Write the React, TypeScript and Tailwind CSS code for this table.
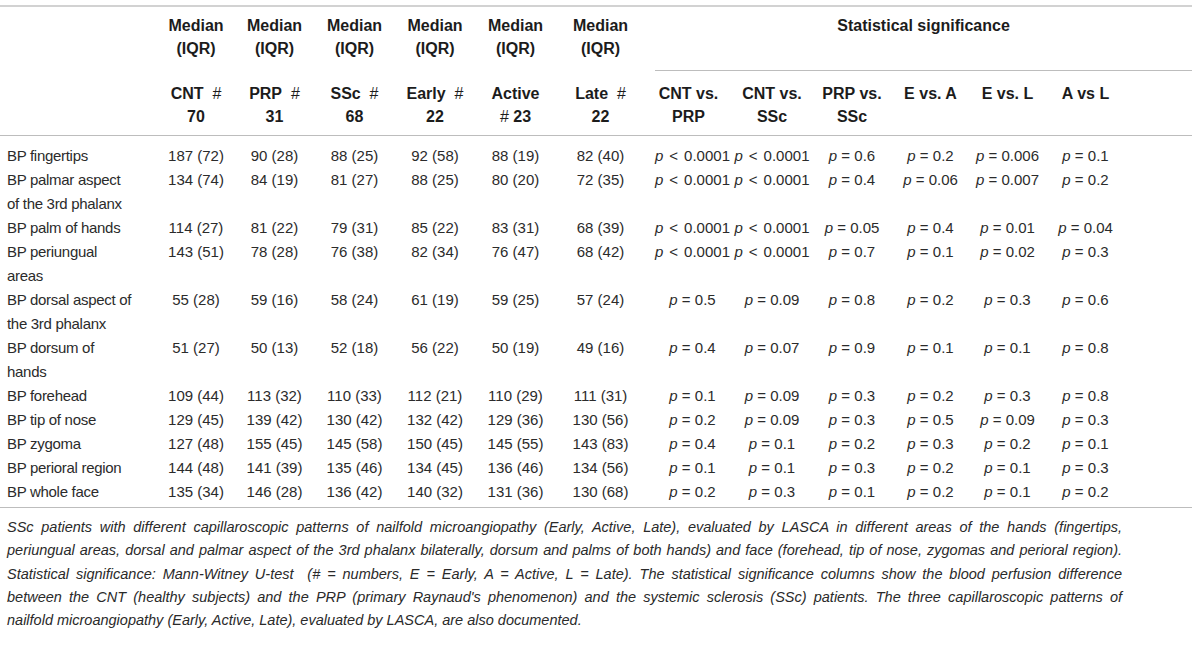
import React from "react";

type Row = { label: string[]; vals: string[]; p: string[] };

const rows: Row[] = [
  { label: ["BP fingertips"], vals: ["187 (72)", "90 (28)", "88 (25)", "92 (58)", "88 (19)", "82 (40)"], p: ["<0.0001", "<0.0001", "0.6", "0.2", "0.006", "0.1"] },
  { label: ["BP palmar aspect", "of the 3rd phalanx"], vals: ["134 (74)", "84 (19)", "81 (27)", "88 (25)", "80 (20)", "72 (35)"], p: ["<0.0001", "<0.0001", "0.4", "0.06", "0.007", "0.2"] },
  { label: ["BP palm of hands"], vals: ["114 (27)", "81 (22)", "79 (31)", "85 (22)", "83 (31)", "68 (39)"], p: ["<0.0001", "<0.0001", "0.05", "0.4", "0.01", "0.04"] },
  { label: ["BP periungual", "areas"], vals: ["143 (51)", "78 (28)", "76 (38)", "82 (34)", "76 (47)", "68 (42)"], p: ["<0.0001", "<0.0001", "0.7", "0.1", "0.02", "0.3"] },
  { label: ["BP dorsal aspect of", "the 3rd phalanx"], vals: ["55 (28)", "59 (16)", "58 (24)", "61 (19)", "59 (25)", "57 (24)"], p: ["0.5", "0.09", "0.8", "0.2", "0.3", "0.6"] },
  { label: ["BP dorsum of", "hands"], vals: ["51 (27)", "50 (13)", "52 (18)", "56 (22)", "50 (19)", "49 (16)"], p: ["0.4", "0.07", "0.9", "0.1", "0.1", "0.8"] },
  { label: ["BP forehead"], vals: ["109 (44)", "113 (32)", "110 (33)", "112 (21)", "110 (29)", "111 (31)"], p: ["0.1", "0.09", "0.3", "0.2", "0.3", "0.8"] },
  { label: ["BP tip of nose"], vals: ["129 (45)", "139 (42)", "130 (42)", "132 (42)", "129 (36)", "130 (56)"], p: ["0.2", "0.09", "0.3", "0.5", "0.09", "0.3"] },
  { label: ["BP zygoma"], vals: ["127 (48)", "155 (45)", "145 (58)", "150 (45)", "145 (55)", "143 (83)"], p: ["0.4", "0.1", "0.2", "0.3", "0.2", "0.1"] },
  { label: ["BP perioral region"], vals: ["144 (48)", "141 (39)", "135 (46)", "134 (45)", "136 (46)", "134 (56)"], p: ["0.1", "0.1", "0.3", "0.2", "0.1", "0.3"] },
  { label: ["BP whole face"], vals: ["135 (34)", "146 (28)", "136 (42)", "140 (32)", "131 (36)", "130 (68)"], p: ["0.2", "0.3", "0.1", "0.2", "0.1", "0.2"] },
];

const groups = [
  ["CNT", "70"],
  ["PRP", "31"],
  ["SSc", "68"],
  ["Early", "22"],
];

const stats = [
  ["CNT vs.", "PRP"],
  ["CNT vs.", "SSc"],
  ["PRP vs.", "SSc"],
  ["E vs. A"],
  ["E vs. L"],
  ["A vs L"],
];

const caption = [
  "SSc patients with different capillaroscopic patterns of nailfold microangiopathy (Early, Active, Late), evaluated by LASCA in different areas of the hands (fingertips,",
  "periungual areas, dorsal and palmar aspect of the 3rd phalanx bilaterally, dorsum and palms of both hands) and face (forehead, tip of nose, zygomas and perioral region).",
  "Statistical significance: Mann-Witney U-test\u00a0 (# = numbers, E = Early, A = Active, L = Late). The statistical significance columns show the blood perfusion difference",
  "between the CNT (healthy subjects) and the PRP (primary Raynaud's phenomenon) and the systemic sclerosis (SSc) patients. The three capillaroscopic patterns of",
];

function PValue({ v }: { v: string }) {
  const less = v.startsWith("<");
  if (less) {
    return (
      <span>
        <i>p</i>
        <span className="mx-[6px]">&lt;</span>
        {v.slice(1)}
      </span>
    );
  }
  return (
    <span>
      <i>p</i> = {v}
    </span>
  );
}

export default function App() {
  return (
    <div className="w-[1200px] h-[646px] bg-white pt-[5px] text-[#2b2b2b] font-['Liberation_Sans',Arial,sans-serif] overflow-hidden">
      <table className="w-[1192px] table-fixed border-collapse border-t-2 border-[#d2d2d2] text-[15px] leading-[24px]">
        <colgroup>
          <col className="w-[157px]" />
          <col className="w-[78px]" />
          <col className="w-[79px]" />
          <col className="w-[81px]" />
          <col className="w-[80px]" />
          <col className="w-[81px]" />
          <col className="w-[89px]" />
          <col className="w-[87px]" />
          <col className="w-[80px]" />
          <col className="w-[80px]" />
          <col className="w-[77px]" />
          <col className="w-[77px]" />
          <col className="w-[79px]" />
          <col className="w-[67px]" />
        </colgroup>
        <thead className="font-bold text-[#1c1c1c]">
          <tr>
            <th className="p-0" />
            {[0, 1, 2, 3, 4, 5].map((i) => (
              <th key={i} className="pt-[7px] pb-[10px] px-0 align-top text-center font-bold leading-[23px] text-[16px]">
                Median
                <br />
                (IQR)
              </th>
            ))}
            <th colSpan={7} className="p-0 align-top">
              <div className="ml-[10px] h-[64px] border-b border-[#bdbdbd] pt-[7px] text-center text-[16px] leading-[23px]">
                Statistical significance
              </div>
            </th>
          </tr>
          <tr className="border-b border-[#bdbdbd]">
            <th className="p-0" />
            {groups.map(([name, n]) => (
              <th key={name} className="pt-[11px] pb-[7px] px-0 align-top text-center text-[16px] leading-[23px]">
                {name}&nbsp; <span className="font-normal">#</span>
                <br />
                {n}
              </th>
            ))}
            <th className="pt-[11px] pb-[7px] px-0 align-top text-center text-[16px] leading-[23px]">
              Active
              <br />
              <span className="font-normal">#</span> 23
            </th>
            <th className="pt-[11px] pb-[7px] px-0 align-top text-center text-[16px] leading-[23px]">
              Late&nbsp; <span className="font-normal">#</span>
              <br />
              22
            </th>
            {stats.map((s, i) => (
              <th key={i} className="pt-[11px] pb-[7px] px-0 align-top text-center text-[16px] leading-[23px]">
                {s[0]}
                {s[1] && (
                  <>
                    <br />
                    {s[1]}
                  </>
                )}
              </th>
            ))}
            <th className="p-0" />
          </tr>
        </thead>
        <tbody className="border-b border-[#bdbdbd]">
          {rows.map((r, ri) => {
            const pad = ri === 0 ? "pt-[8px]" : ri === rows.length - 1 ? "pb-[3px]" : "";
            return (
              <tr key={ri}>
                <td className={`pl-[7px] align-top whitespace-nowrap tracking-[-0.3px] ${pad}`}>
                  {r.label.map((l, k) => (
                    <div key={k}>{l}</div>
                  ))}
                </td>
                {r.vals.map((v, k) => (
                  <td key={k} className={`align-top text-center whitespace-nowrap ${pad}`}>
                    {v}
                  </td>
                ))}
                {r.p.map((v, k) => (
                  <td key={k} className={`align-top text-center whitespace-nowrap ${pad} ${k === 0 ? "pl-[8px]" : ""}`}>
                    <PValue v={v} />
                  </td>
                ))}
                <td className={pad} />
              </tr>
            );
          })}
        </tbody>
      </table>
      <div className="mt-[8px] ml-[7px] w-[1115px] italic text-[14.5px] leading-[23.25px] text-[#2a2a2a]">
        {caption.map((c, i) => (
          <div key={i} className="text-justify [text-align-last:justify] whitespace-nowrap">
            {c}
          </div>
        ))}
        <div>nailfold microangiopathy (Early, Active, Late), evaluated by LASCA, are also documented.</div>
      </div>
    </div>
  );
}
